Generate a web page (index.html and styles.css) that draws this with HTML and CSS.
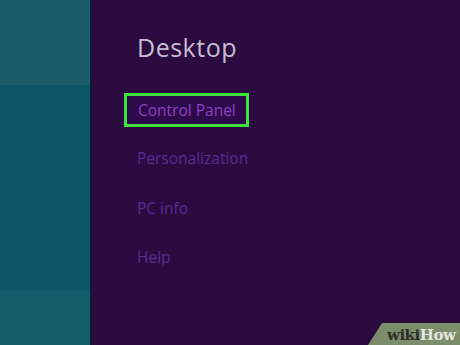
FILE: index.html
```html
<!DOCTYPE html>
<html lang="en">
<head>
    <meta charset="UTF-8">
    <meta name="viewport" content="width=device-width, initial-scale=1.0">
    <title>Desktop settings</title>
    <link rel="stylesheet" href="styles.css">
</head>
<body>
    <div class="start-side">
        <div class="band band-top"></div>
        <div class="band band-mid"></div>
        <div class="band band-bottom"></div>
    </div>
    <div class="divider"></div>
    <div class="charm-panel">
        <h1 class="title">Desktop</h1>
        <ul class="menu">
            <li class="menu-item selected">Control Panel</li>
            <li class="menu-item">Personalization</li>
            <li class="menu-item">PC info</li>
            <li class="menu-item">Help</li>
        </ul>
    </div>
    <div class="wiki-badge"><span class="wiki">wiki</span><span class="how">How</span></div>
</body>
</html>
```

FILE: styles.css
```css
html, body {
    height: 100%;
}
body {
    margin: 0;
    padding: 0;
    display: flex;
    background-color: #2b0a40;
    font-family: "Open Sans", "Noto Sans", sans-serif;
    overflow: hidden;
}
.start-side {
    width: 90px;
    display: flex;
    flex-direction: column;
}
.band {
    width: 100%;
}
.band-top {
    height: 85px;
    background-color: #1c5c6b;
}
.band-mid {
    flex: 1;
    background-color: #0b5767;
}
.band-bottom {
    height: 55px;
    background-color: #135c6b;
}
.divider {
    width: 2px;
    background-color: #0d1a3a;
}
.charm-panel {
    flex: 1;
    padding: 31px 0 0 32px;
}
.title {
    margin: 0 0 0 13px;
    font-size: 25px;
    font-weight: 400;
    letter-spacing: 0.5px;
    line-height: 32px;
    color: #c6bdd2;
}
.menu {
    list-style: none;
    margin: 30px 0 0 0;
    padding: 0;
}
.menu-item {
    font-size: 15.5px;
    color: #5b2c93;
    padding: 0 0 0 13px;
    height: 49.5px;
    line-height: 24px;
}
.menu-item.selected {
    width: 108px;
    height: 28px;
    line-height: 28px;
    border: 3px solid #3fe23d;
    background-color: #2f0a4b;
    color: #8b42c4;
    margin: 0 0 19px 0;
    padding-left: 11px;
}
.wiki-badge {
    position: absolute;
    right: 0;
    bottom: 0;
    width: 92px;
    height: 22px;
    background-color: #7c8d6b;
    clip-path: polygon(14px 0, 100% 0, 100% 100%, 0 100%);
    font-family: "DejaVu Serif", "Liberation Serif", serif;
    font-weight: bold;
    font-size: 15px;
    line-height: 24px;
    padding-left: 19px;
    box-sizing: border-box;
    letter-spacing: -0.5px;
}
.wiki {
    color: #2c2f29;
}
.how {
    color: #e4e6e0;
}
```
